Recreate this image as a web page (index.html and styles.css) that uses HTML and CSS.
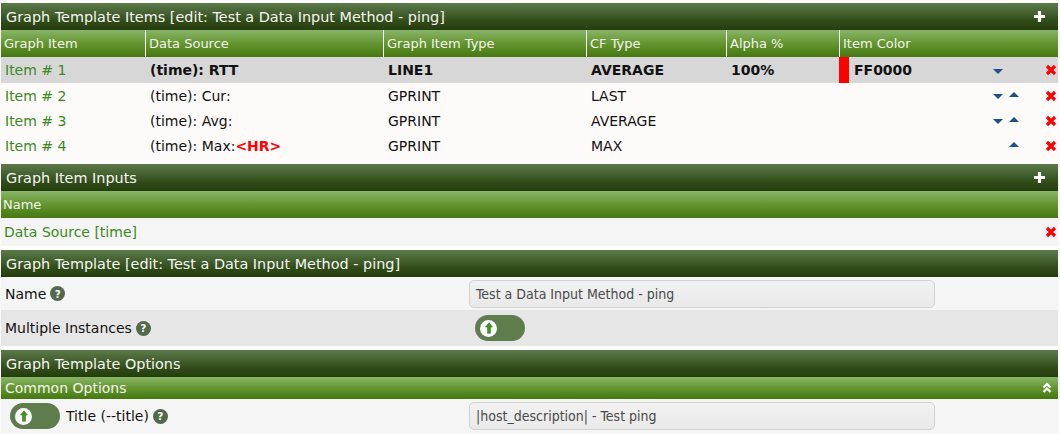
FILE: index.html
```html
<!DOCTYPE html>
<html>
<head>
<meta charset="utf-8">
<link rel="stylesheet" href="styles.css">
</head>
<body>
<div class="page">

  <section class="panel panel-items">
    <div class="hdr">
      <span class="hdr-title">Graph Template Items [edit: Test a Data Input Method - ping]</span>
      <svg class="plus" width="13" height="13" viewBox="0 0 13 13"><path d="M6.5 1v11M1 6.5h11" stroke="#fff" stroke-width="3.2"/></svg>
    </div>
    <div class="grid colhdr">
      <div class="c">Graph Item</div>
      <div class="c b">Data Source</div>
      <div class="c b">Graph Item Type</div>
      <div class="c b">CF Type</div>
      <div class="c b">Alpha %</div>
      <div class="c b span3">Item Color</div>
    </div>
    <div class="grid row sel">
      <div class="c link">Item # 1</div>
      <div class="c bold">(time): RTT</div>
      <div class="c bold">LINE1</div>
      <div class="c bold">AVERAGE</div>
      <div class="c bold">100%</div>
      <div class="c color bold"><span class="swatch"></span>FF0000</div>
      <div class="c arrows"><span class="dn"></span></div>
      <div class="c del"><svg width="12" height="12" viewBox="0 0 12 12"><path d="M2 2l8 8M10 2l-8 8" stroke="#f00" stroke-width="3.2"/></svg></div>
    </div>
    <div class="grid row">
      <div class="c link">Item # 2</div>
      <div class="c">(time): Cur:</div>
      <div class="c">GPRINT</div>
      <div class="c">LAST</div>
      <div class="c"></div>
      <div class="c color"></div>
      <div class="c arrows"><span class="dn"></span><span class="up"></span></div>
      <div class="c del"><svg width="12" height="12" viewBox="0 0 12 12"><path d="M2 2l8 8M10 2l-8 8" stroke="#f00" stroke-width="3.2"/></svg></div>
    </div>
    <div class="grid row">
      <div class="c link">Item # 3</div>
      <div class="c">(time): Avg:</div>
      <div class="c">GPRINT</div>
      <div class="c">AVERAGE</div>
      <div class="c"></div>
      <div class="c color"></div>
      <div class="c arrows"><span class="dn"></span><span class="up"></span></div>
      <div class="c del"><svg width="12" height="12" viewBox="0 0 12 12"><path d="M2 2l8 8M10 2l-8 8" stroke="#f00" stroke-width="3.2"/></svg></div>
    </div>
    <div class="grid row">
      <div class="c link">Item # 4</div>
      <div class="c">(time): Max:<span class="hr">&lt;HR&gt;</span></div>
      <div class="c">GPRINT</div>
      <div class="c">MAX</div>
      <div class="c"></div>
      <div class="c color"></div>
      <div class="c arrows"><span class="dn hidden"></span><span class="up"></span></div>
      <div class="c del"><svg width="12" height="12" viewBox="0 0 12 12"><path d="M2 2l8 8M10 2l-8 8" stroke="#f00" stroke-width="3.2"/></svg></div>
    </div>
  </section>

  <section class="panel panel-inputs">
    <div class="hdr">
      <span class="hdr-title">Graph Item Inputs</span>
      <svg class="plus" width="13" height="13" viewBox="0 0 13 13"><path d="M6.5 1v11M1 6.5h11" stroke="#fff" stroke-width="3.2"/></svg>
    </div>
    <div class="colhdr single"><div class="c">Name</div></div>
    <div class="inrow">
      <span class="link">Data Source [time]</span>
      <svg class="delx" width="12" height="12" viewBox="0 0 12 12"><path d="M2 2l8 8M10 2l-8 8" stroke="#f00" stroke-width="3.2"/></svg>
    </div>
  </section>

  <section class="panel panel-tpl">
    <div class="hdr"><span class="hdr-title">Graph Template [edit: Test a Data Input Method - ping]</span></div>
    <div class="frow name-row">
      <div class="flabel">Name <span class="help">?</span></div>
      <div class="finput"><div class="txt">Test a Data Input Method - ping</div></div>
    </div>
    <div class="frow mi-row">
      <div class="flabel">Multiple Instances <span class="help">?</span></div>
      <div class="finput">
        <span class="toggle"><span class="knob"><svg width="8" height="12" viewBox="0 0 8 12"><path d="M4 0.8L7.4 5H5.4V11.2H2.6V5H0.6Z" fill="#3f9c1c" stroke="#2a6a10" stroke-width="0.6"/></svg></span></span>
      </div>
    </div>
  </section>

  <section class="panel panel-opts">
    <div class="hdr"><span class="hdr-title">Graph Template Options</span></div>
    <div class="subhdr">
      <span>Common Options</span>
      <svg class="chev" width="10" height="12" viewBox="0 0 10 12"><path d="M1.5 5.5L5 2L8.5 5.5M1.5 10L5 6.5L8.5 10" stroke="#fff" stroke-width="2.2" fill="none"/></svg>
    </div>
    <div class="frow title-row">
      <div class="flabel">
        <span class="toggle"><span class="knob"><svg width="8" height="12" viewBox="0 0 8 12"><path d="M4 0.8L7.4 5H5.4V11.2H2.6V5H0.6Z" fill="#3f9c1c" stroke="#2a6a10" stroke-width="0.6"/></svg></span></span>
        <span class="tlabel">Title (--title) <span class="help">?</span></span>
      </div>
      <div class="finput"><div class="txt">|host_description| - Test ping</div></div>
    </div>
  </section>

</div>
</body>
</html>
```
FILE: styles.css
```css
html, body {
  margin: 0;
  padding: 0;
  background: #fdfafa;
}
body {
  font-family: "DejaVu Sans", Verdana, sans-serif;
  font-size: 14px;
  color: #111;
}
.page {
  margin: 3px 2px 0 1px;
  display: flex;
  flex-direction: column;
}
.panel {
  display: flex;
  flex-direction: column;
}
.panel-items { padding-bottom: 6px; }
.panel-inputs { padding-bottom: 4px; background: #fff; }
.panel-tpl { padding-bottom: 4px; background: #fff; }

.hdr {
  height: 27px;
  background: linear-gradient(#5c7a4b, #2f4a17 70%, #243d0e);
  color: #f6f6f2;
  display: flex;
  align-items: center;
  justify-content: space-between;
  padding: 0 12px 0 5px;
  font-size: 14.4px;
}
.hdr-title { white-space: nowrap; }
.plus { display: block; }

.colhdr {
  height: 27px;
  background: linear-gradient(#88b568, #64952f 50%, #457811);
  color: #f2f5ee;
  font-size: 13px;
}
.grid {
  display: grid;
  grid-template-columns: 144px 238px 203px 140px 113px 146px 50px 1fr;
}
.grid .c {
  display: flex;
  align-items: center;
  padding-left: 3px;
  white-space: nowrap;
  min-width: 0;
}
.colhdr .c.b { border-left: 1px solid #fff; }
.colhdr .span3 { grid-column: span 3; }
.colhdr.single { display: flex; align-items: center; padding-left: 2px; }

.row { height: 25px; }
.row .c { padding-left: 4px; }
.row.sel { height: 26px; background: #d7d7d7; }
.row .c:nth-child(n+2) { padding-left: 5px; }
.bold { font-weight: bold; }
.link { color: #3a8a1c; }
.hr { color: #f00; font-weight: bold; }

.row .color { padding-left: 0 !important; }
.swatch {
  width: 10px;
  align-self: stretch;
  background: #f00;
  margin-right: 5px;
}
.row .arrows { padding-left: 8px !important; gap: 6px; }
.dn, .up {
  width: 0; height: 0;
  border-left: 5px solid transparent;
  border-right: 5px solid transparent;
}
.dn { border-top: 5px solid #1d4f8f; margin-top: 2px; }
.up { border-bottom: 5px solid #1d4f8f; margin-top: -2px; }
.hidden { visibility: hidden; }
.row .del { padding-left: 10px !important; }
.del svg, .delx { display: block; }

.inrow {
  height: 28px;
  background: #f5f5f5;
  display: flex;
  align-items: center;
  justify-content: space-between;
  padding: 0 1px 0 3px;
}

.frow {
  display: grid;
  grid-template-columns: 468px 466px 1fr;
  align-items: center;
}
.frow .finput { grid-column: 2; }
.name-row { height: 33px; background: #f5f5f5; }
.mi-row { height: 36px; background: #e6e6e6; }
.title-row { height: 34px; background: #f5f5f5; }
.flabel {
  padding-left: 4px;
  display: flex;
  align-items: center;
  gap: 4px;
  white-space: nowrap;
}
.help {
  display: inline-flex;
  align-items: center;
  justify-content: center;
  width: 15px;
  height: 15px;
  border-radius: 50%;
  background: #52694a;
  color: #fff;
  font-size: 10.5px;
  font-weight: bold;
}
.txt {
  height: 28px;
  box-sizing: border-box;
  border: 1px solid #d2d2d2;
  border-radius: 5px;
  background: linear-gradient(#f2f2f2, #e9e9e9);
  font-family: "DejaVu Sans Condensed", "Liberation Sans Narrow", sans-serif;
  font-size: 14px;
  color: #4a4a4a;
  display: flex;
  align-items: center;
  padding-left: 6px;
}
.mi-row .finput { padding-left: 6px; }
.toggle {
  width: 50px;
  height: 26px;
  border-radius: 13px;
  background: #5f7c4c;
  display: inline-flex;
  align-items: center;
  padding-left: 5px;
  box-sizing: border-box;
}
.knob {
  width: 17px;
  height: 17px;
  border-radius: 50%;
  background: #fff;
  display: flex;
  align-items: center;
  justify-content: center;
}
.knob svg { display: block; }

.subhdr {
  height: 22px;
  background: linear-gradient(#88b568, #64952f 50%, #457811);
  color: #f2f5ee;
  display: flex;
  align-items: center;
  justify-content: space-between;
  padding: 0 6px 0 4px;
  font-size: 14px;
}
.chev { display: block; }
.title-row .flabel { padding-left: 9px; gap: 6px; }
.tlabel { display: inline-flex; align-items: center; gap: 4px; }
```
